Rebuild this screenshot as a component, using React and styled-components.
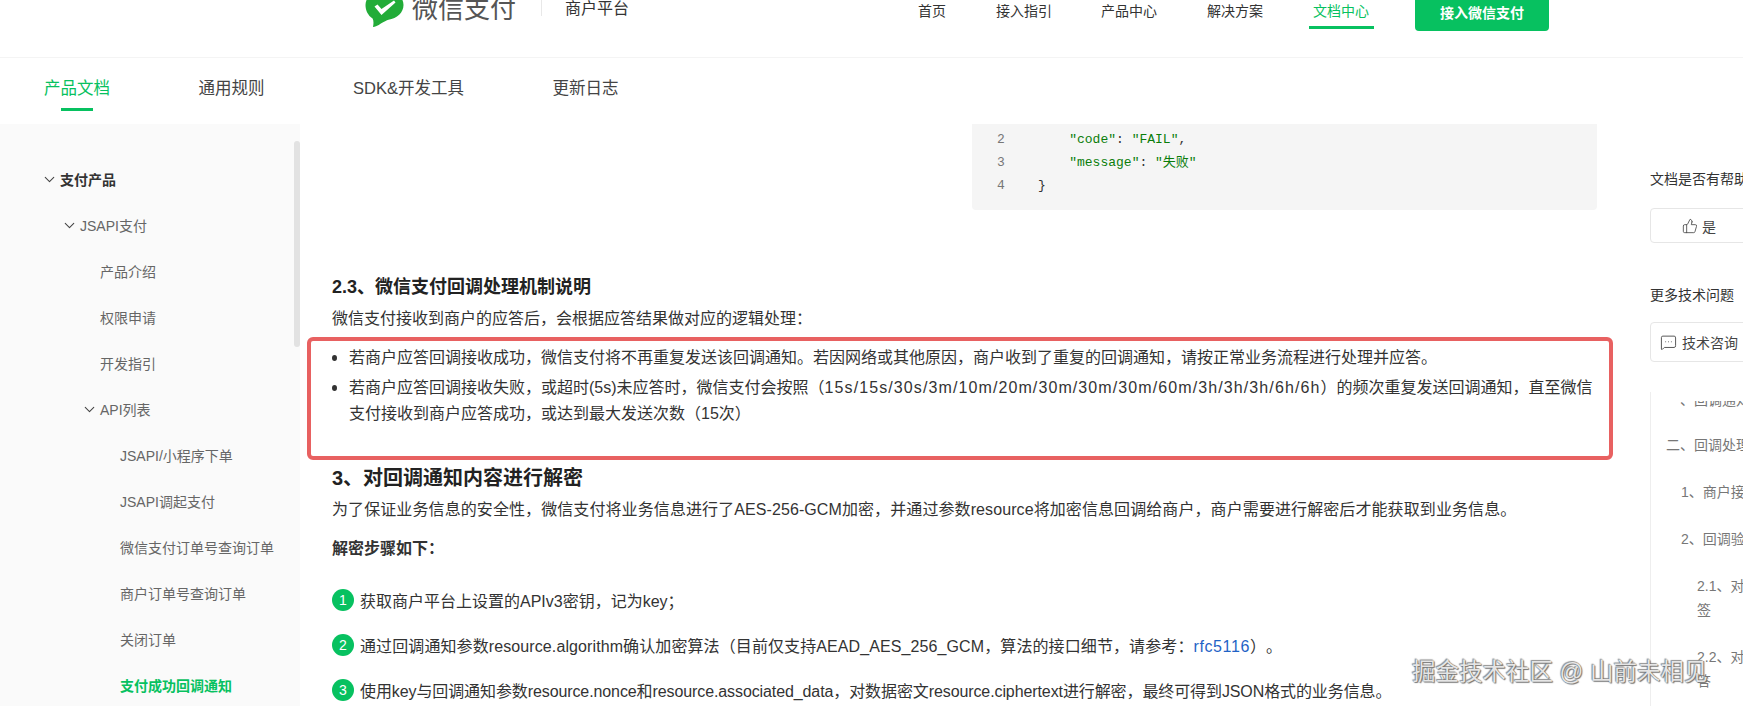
import React from "react";
import styled, { createGlobalStyle } from "styled-components";
import { ChevronDown, ThumbsUp, MessageSquareMore } from "lucide-react";

const GlobalStyle = createGlobalStyle`
  html, body { margin: 0; padding: 0; background: #fff; }
  body {
    font-family: "Liberation Sans", "Noto Sans CJK SC", sans-serif;
    color: #222;
    text-spacing-trim: space-all;
  }
`;

const Page = styled.div`
  position: relative;
  width: 1743px;
  height: 706px;
  overflow: hidden;
`;

const Header = styled.header`
  height: 57px;
  border-bottom: 1px solid #f4f4f4;
  box-sizing: content-box;
  display: flex;
  align-items: flex-start;
`;

const Brand = styled.div`
  margin-left: 365px;
  display: flex;
  align-items: flex-start;
  height: 28px;
  overflow: hidden;
`;

const BrandName = styled.span`
  margin-left: 8px;
  margin-top: -9px;
  font-size: 26px;
  line-height: 36px;
  color: #555;
`;

const BrandDivider = styled.span`
  width: 1px;
  height: 16px;
  margin-left: 25px;
  background: #e8e8e8;
`;

const BrandSub = styled.span`
  margin-left: 23px;
  font-size: 16px;
  line-height: 18px;
  color: #333;
`;

const Nav = styled.nav`
  margin-left: 289px;
  display: flex;
  align-items: flex-start;
`;

const NavLink = styled.a`
  position: relative;
  margin-right: ${(p) => p.$gap}px;
  font-size: 14px;
  line-height: 23px;
  color: ${(p) => (p.$active ? "#07c160" : "#333")};

  ${(p) =>
    p.$active &&
    `&::after {
      content: "";
      position: absolute;
      left: -4px;
      right: -5px;
      top: 26px;
      height: 3px;
      background: #07c160;
    }`}
`;

const JoinButton = styled.button`
  width: 134px;
  height: 31px;
  margin-left: -6px;
  padding: 0 0 7px;
  border: 0;
  border-radius: 0 0 4px 4px;
  background: #07c160;
  color: #fff;
  font: inherit;
  font-size: 14px;
  font-weight: 700;
`;

const Tabs = styled.div`
  height: 66px;
  padding-left: 44px;
  display: flex;
  gap: 88.5px;
  align-items: flex-start;
`;

const Tab = styled.a`
  position: relative;
  margin-top: 18px;
  font-size: 16.5px;
  line-height: 24px;
  color: ${(p) => (p.$active ? "#07c160" : "#444")};

  ${(p) =>
    p.$active &&
    `&::after {
      content: "";
      position: absolute;
      left: 17px;
      width: 32px;
      top: 32px;
      height: 3px;
      background: #07c160;
    }`}
`;

const Body = styled.div`
  display: grid;
  grid-template-columns: 300px 1350px 93px;
  height: 582px;
  overflow: hidden;
`;

const Sidebar = styled.aside`
  position: relative;
  background: #fafafa;
  padding-top: 32px;
  overflow: hidden;
`;

const SideScroll = styled.div`
  position: absolute;
  right: 0;
  top: 17px;
  width: 6px;
  height: 206px;
  border-radius: 3px;
  background: #e2e2e2;
`;

const SideRow = styled.div`
  height: 46px;
  padding-left: ${(p) => p.$indent}px;
  display: flex;
  align-items: center;
  gap: 2px;
  font-size: 14px;
  font-weight: ${(p) => (p.$bold ? 700 : 400)};
  color: ${(p) => (p.$active ? "#07c160" : p.$bold ? "#333" : "#666")};
`;

const Chevron = styled(ChevronDown)`
  flex: none;
  margin-left: -2px;
  color: #444;
`;

const Main = styled.main`
  padding-left: 32px;
  overflow: hidden;
`;

const CodeBlock = styled.pre`
  width: 625px;
  height: 116px;
  box-sizing: border-box;
  margin: -30px 0 0 640px;
  padding: 11px 0 0 25px;
  background: #f5f5f5;
  border-radius: 0 0 4px 4px;
  font-family: "Liberation Mono", "Noto Sans CJK SC", monospace;
  font-size: 13px;
  line-height: 23px;
  color: #333;
`;

const CodeLine = styled.div`
  display: flex;
`;

const LineNo = styled.span`
  width: 41px;
  color: #777;
`;

const Str = styled.span`
  color: #0a7d0a;
`;

const SubTitle = styled.h3`
  margin: 65px 0 0;
  font-size: 18px;
  line-height: 24px;
  font-weight: 700;
  color: #222;
`;

const Text = styled.p`
  margin: ${(p) => p.$top}px 0 0;
  font-size: 16px;
  line-height: 24px;
  letter-spacing: ${(p) => p.$track || 0}px;
  font-weight: ${(p) => (p.$bold ? 700 : 400)};
  color: #333;
`;

const Marked = styled.div`
  width: 1306px;
  height: 123px;
  box-sizing: border-box;
  margin: 6px 0 0 -25px;
  padding: 4px 13px 0 21px;
  border: 4px solid #e86161;
  border-radius: 6px;
`;

const Item = styled.div`
  display: flex;
  gap: 12px;
  margin-bottom: 4px;
  font-size: 16px;
  line-height: 26px;
  color: #333;
`;

const Bullet = styled.span`
  flex: none;
  width: 5px;
  height: 6px;
  margin-top: 10px;
  border-radius: 50%;
  background: #333;
`;

const Intervals = styled.span`
  letter-spacing: 1.1px;
`;

const SectionTitle = styled.h2`
  margin: 4px 0 0;
  font-size: 20px;
  line-height: 28px;
  font-weight: 700;
  color: #222;
`;

const Steps = styled.div`
  margin-top: 26px;
  display: flex;
  flex-direction: column;
  gap: 19px;
`;

const Step = styled.div`
  display: flex;
  align-items: center;
  gap: 6px;
  height: 26px;
  font-size: 16px;
  letter-spacing: ${(p) => p.$track || 0}px;
  color: #333;
`;

const StepNo = styled.span`
  flex: none;
  width: 22px;
  height: 22px;
  border-radius: 50%;
  background: #07c160;
  color: #fff;
  font-size: 14px;
  line-height: 22px;
  letter-spacing: 0;
  text-align: center;
`;

const Link = styled.a`
  color: #1f63c6;
  letter-spacing: 0.6px;
`;

const Aside = styled.aside`
  padding-top: 45px;
  width: 300px;
  font-size: 14px;
  color: #333;
`;

const Label = styled.div`
  margin-top: ${(p) => p.$top}px;
  line-height: 20px;
  white-space: nowrap;
`;

const OutlineButton = styled.div`
  margin-top: ${(p) => p.$top}px;
  height: ${(p) => p.$height}px;
  padding-left: ${(p) => p.$pad}px;
  box-sizing: border-box;
  display: flex;
  align-items: center;
  gap: ${(p) => p.$gap}px;
  border: 1px solid #e6e6e6;
  border-radius: 4px;
  color: #444;
`;

const Toc = styled.div`
  position: relative;
  height: 320px;
  margin-top: 30px;
  border-left: 1px solid #eee;
  overflow: hidden;
  color: #777;

  &::before {
    content: "";
    position: absolute;
    left: 0;
    right: 0;
    top: 0;
    height: 9px;
    background: #fff;
  }
`;

const TocList = styled.div`
  margin-top: -4px;
  display: flex;
  flex-direction: column;
  gap: 23px;
`;

const TocItem = styled.div`
  padding-left: ${(p) => p.$indent}px;
  line-height: 24px;

  &:first-child {
    height: 22px;
  }
`;

const Watermark = styled.div`
  position: absolute;
  left: 1412px;
  top: 655px;
  font-size: 23.5px;
  line-height: 34px;
  white-space: nowrap;
  color: rgba(255, 255, 255, 0.85);
  text-shadow: 0 0 1px #555, 1px 1px 1px #777, -1px -1px 1px #999;
`;

function WechatLogo() {
  return (
    <svg width="39" height="27" viewBox="0 0 39 27">
      <path
        d="M19.5 -10C30 -10 38.5 -3.5 38.5 5C38.5 12.5 32 18.5 23.5 19.7C20 20.3 12 27 8 27C8.6 24 8.8 21 7.6 18.5C3 15.5 0.5 10.5 0.5 5C0.5 -3.5 9 -10 19.5 -10Z"
        fill="#22ac38"
      />
      <path d="M9.5 6.5L12.5 4.5L16.5 9L29 0.5L30.5 2.5L16.5 15Z" fill="#fff" />
    </svg>
  );
}

const sideRows = [
  { text: "支付产品", indent: 43, chevron: true, bold: true },
  { text: "JSAPI支付", indent: 63, chevron: true },
  { text: "产品介绍", indent: 100 },
  { text: "权限申请", indent: 100 },
  { text: "开发指引", indent: 100 },
  { text: "API列表", indent: 83, chevron: true },
  { text: "JSAPI/小程序下单", indent: 120 },
  { text: "JSAPI调起支付", indent: 120 },
  { text: "微信支付订单号查询订单", indent: 120 },
  { text: "商户订单号查询订单", indent: 120 },
  { text: "关闭订单", indent: 120 },
  { text: "支付成功回调通知", indent: 120, bold: true, active: true },
];

export default function App() {
  return (
    <Page>
      <GlobalStyle />
      <Header>
        <Brand>
          <WechatLogo />
          <BrandName>微信支付</BrandName>
          <BrandDivider />
          <BrandSub>商户平台</BrandSub>
        </Brand>
        <Nav>
          <NavLink $gap={50}>首页</NavLink>
          <NavLink $gap={49}>接入指引</NavLink>
          <NavLink $gap={50}>产品中心</NavLink>
          <NavLink $gap={50}>解决方案</NavLink>
          <NavLink $gap={52} $active>文档中心</NavLink>
          <JoinButton>接入微信支付</JoinButton>
        </Nav>
      </Header>
      <Tabs>
        <Tab $active>产品文档</Tab>
        <Tab>通用规则</Tab>
        <Tab>SDK&amp;开发工具</Tab>
        <Tab>更新日志</Tab>
      </Tabs>
      <Body>
        <Sidebar>
          <SideScroll />
          {sideRows.map((row) => (
            <SideRow
              key={row.text}
              $indent={row.indent}
              $bold={row.bold}
              $active={row.active}
            >
              {row.chevron && <Chevron size={17} strokeWidth={1.5} />}
              {row.text}
            </SideRow>
          ))}
        </Sidebar>
        <Main>
          <CodeBlock>
            <CodeLine><LineNo>1</LineNo>{"{"}</CodeLine>
            <CodeLine><LineNo>2</LineNo><span>    <Str>"code"</Str>: <Str>"FAIL"</Str>,</span></CodeLine>
            <CodeLine><LineNo>3</LineNo><span>    <Str>"message"</Str>: <Str>"失败"</Str></span></CodeLine>
            <CodeLine><LineNo>4</LineNo>{"}"}</CodeLine>
          </CodeBlock>
          <SubTitle>2.3、微信支付回调处理机制说明</SubTitle>
          <Text $top={8}>微信支付接收到商户的应答后，会根据应答结果做对应的逻辑处理：</Text>
          <Marked>
            <Item>
              <Bullet />
              <span>若商户应答回调接收成功，微信支付将不再重复发送该回调通知。若因网络或其他原因，商户收到了重复的回调通知，请按正常业务流程进行处理并应答。</span>
            </Item>
            <Item>
              <Bullet />
              <span>若商户应答回调接收失败，或超时(5s)未应答时，微信支付会按照（<Intervals>15s/15s/30s/3m/10m/20m/30m/30m/30m/60m/3h/3h/3h/6h/6h</Intervals>）的频次重复发送回调通知，直至微信支付接收到商户应答成功，或达到最大发送次数（15次）</span>
            </Item>
          </Marked>
          <SectionTitle>3、对回调通知内容进行解密</SectionTitle>
          <Text $top={6} $track={0.09}>为了保证业务信息的安全性，微信支付将业务信息进行了AES-256-GCM加密，并通过参数resource将加密信息回调给商户，商户需要进行解密后才能获取到业务信息。</Text>
          <Text $top={15} $bold>解密步骤如下：</Text>
          <Steps>
            <Step><StepNo>1</StepNo>获取商户平台上设置的APIv3密钥，记为key；</Step>
            <Step $track={0.1}><StepNo>2</StepNo><span>通过回调通知参数resource.algorithm确认加密算法（目前仅支持AEAD_AES_256_GCM，算法的接口细节，请参考：<Link>rfc5116</Link>）。</span></Step>
            <Step $track={-0.1}><StepNo>3</StepNo>使用key与回调通知参数resource.nonce和resource.associated_data，对数据密文resource.ciphertext进行解密，最终可得到JSON格式的业务信息。</Step>
          </Steps>
        </Main>
        <Aside>
          <Label $top={0}>文档是否有帮助</Label>
          <OutlineButton $top={19} $height={35} $pad={31} $gap={4}>
            <ThumbsUp size={16} strokeWidth={1.25} />是
          </OutlineButton>
          <Label $top={42}>更多技术问题</Label>
          <OutlineButton $top={17} $height={40} $pad={9} $gap={5}>
            <MessageSquareMore size={17} strokeWidth={1.25} />技术咨询
          </OutlineButton>
          <Toc>
            <TocList>
              <TocItem $indent={15}>一、回调通知</TocItem>
              <TocItem $indent={15}>二、回调处理</TocItem>
              <TocItem $indent={30}>1、商户接收回调</TocItem>
              <TocItem $indent={30}>2、回调验签</TocItem>
              <TocItem $indent={46}>2.1、对回调通知进行验<br />签</TocItem>
              <TocItem $indent={46}>2.2、对回调通知进行应<br />答</TocItem>
            </TocList>
          </Toc>
        </Aside>
      </Body>
      <Watermark>掘金技术社区 @ 山前未相见</Watermark>
    </Page>
  );
}
